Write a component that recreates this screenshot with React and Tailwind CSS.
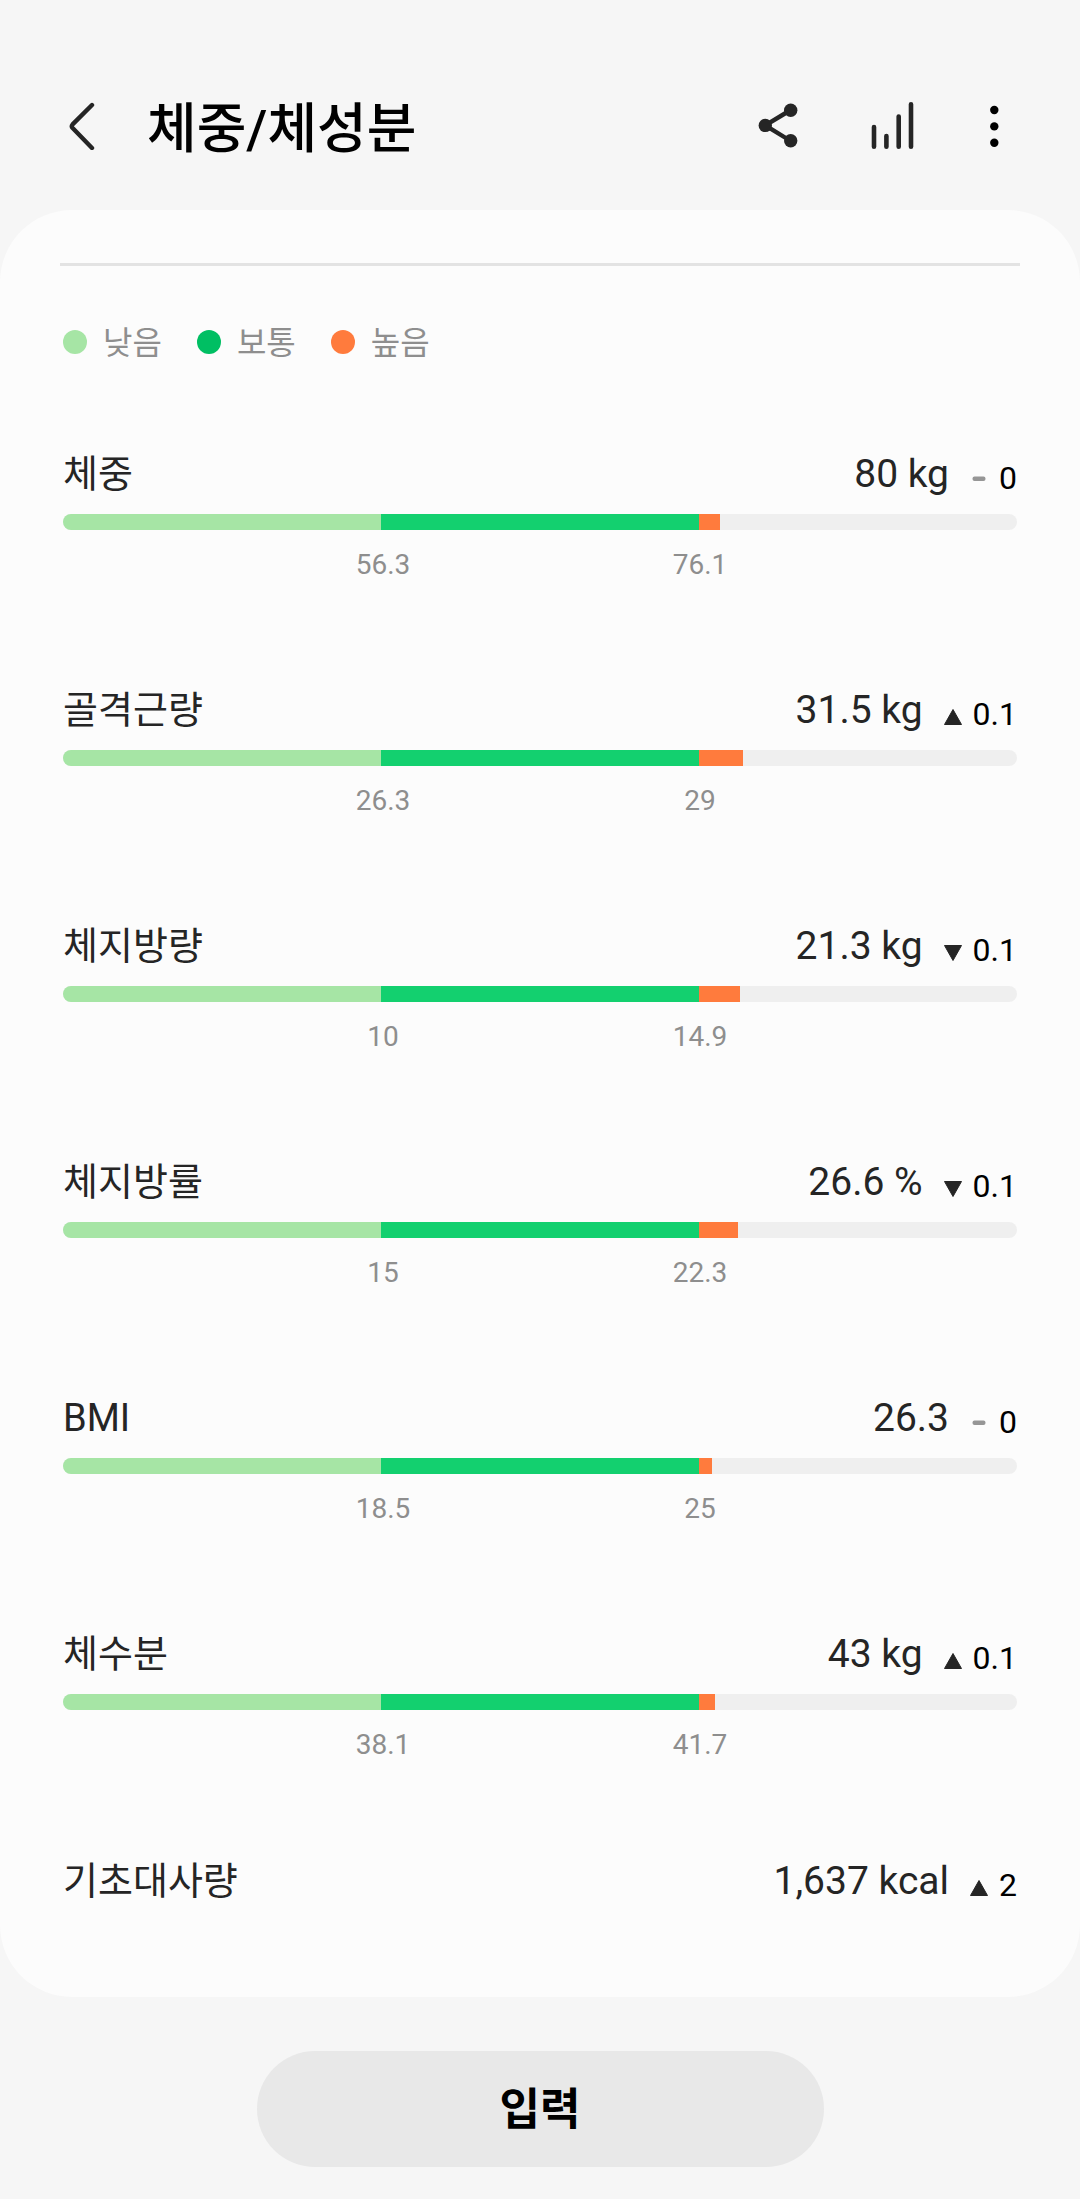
import React from 'react'

const legend = [
  { label: '낮음', dot: 'bg-[#a6e5a5]' },
  { label: '보통', dot: 'bg-[#00bf63]' },
  { label: '높음', dot: 'bg-[#ff7b3d]' }
]

// over = share of the whole bar that is filled past the upper limit, in %
const metrics = [
  { name: '체중', value: '80 kg', trend: 'same', delta: '0', low: '56.3', high: '76.1', over: 2.2 },
  { name: '골격근량', value: '31.5 kg', trend: 'up', delta: '0.1', low: '26.3', high: '29', over: 4.6 },
  { name: '체지방량', value: '21.3 kg', trend: 'down', delta: '0.1', low: '10', high: '14.9', over: 4.3 },
  { name: '체지방률', value: '26.6 %', trend: 'down', delta: '0.1', low: '15', high: '22.3', over: 4.1 },
  { name: 'BMI', value: '26.3', trend: 'same', delta: '0', low: '18.5', high: '25', over: 1.4 },
  { name: '체수분', value: '43 kg', trend: 'up', delta: '0.1', low: '38.1', high: '41.7', over: 1.7 }
]

const TrendIcon = ({ trend }) => (
  <svg className="w-[18px] h-10 shrink-0" viewBox="0 0 18 40" aria-hidden="true">
    {trend === 'up' && <path d="M9 15.5 17.5 30.5H.5Z" fill="#252525" stroke="#252525" strokeLinejoin="round" />}
    {trend === 'down' && <path d="M9 30.5 .5 15.5h17Z" fill="#252525" stroke="#252525" strokeLinejoin="round" />}
    {trend === 'same' && <rect x="2.5" y="18.6" width="13" height="4.4" rx="2" fill="#969696" />}
  </svg>
)

const MetricHead = ({ name, value, trend, delta }) => (
  <div className="flex items-end justify-between">
    <h2 className="text-[38px] leading-[48px] text-[#252525]">{name}</h2>
    <div className="flex items-end">
      <span className="text-[39px] leading-[48px] text-[#252525] mr-[21px]">{value}</span>
      <TrendIcon trend={trend} />
      <span className="text-[32px] leading-10 text-black ml-[11px]">{delta}</span>
    </div>
  </div>
)

const MetricRow = ({ metric }) => (
  <li>
    <MetricHead {...metric} />

    {/* Range bar */}
    <div className="flex h-4 mt-4 rounded-full overflow-hidden bg-[#efefef]">
      <div className="w-1/3 bg-[#a6e5a5]" />
      <div className="w-1/3 bg-[#13d06f]" />
      <div className="bg-[#ff7b3d]" style={{ width: `${metric.over}%` }} />
    </div>

    {/* Limits, centered under the segment edges */}
    <div className="grid grid-cols-6 mt-[15px] pl-[3px] text-[28px] leading-10 text-[#8e8e8e] text-center">
      <span className="col-start-2 col-span-2">{metric.low}</span>
      <span className="col-span-2">{metric.high}</span>
    </div>
  </li>
)

const Header = () => (
  <header className="flex items-center h-[210px] pt-[42px] pl-[57px] pr-[74px]">
    <button aria-label="뒤로">
      <svg className="w-12 h-12" viewBox="0 0 48 48" fill="none" stroke="#252525" strokeWidth="4.4" strokeLinecap="round" strokeLinejoin="round">
        <path d="M35 3 15.6 22.4Q14 24.2 15.6 26L35 46" />
      </svg>
    </button>
    <h1 className="flex-1 ml-[42px] pt-2 text-[54px] leading-[72px] font-medium text-black">체중/체성분</h1>
    <div className="flex items-center gap-[66px]">
      <button aria-label="공유">
        <svg className="w-12 h-12" viewBox="0 0 48 48" fill="#252525">
          <path d="M36.7 8 11.3 23.4 36.7 39" fill="none" stroke="#252525" strokeWidth="4.4" />
          <circle cx="36.7" cy="8.2" r="6.7" />
          <circle cx="11.3" cy="23.4" r="6.7" />
          <circle cx="36.7" cy="38.8" r="6.7" />
        </svg>
      </button>
      <button aria-label="차트">
        <svg className="w-12 h-12" viewBox="0 0 48 48" fill="none" stroke="#252525" strokeWidth="4.6" strokeLinecap="round">
          <path d="M6 25v19.7M18.4 34v10.7M30.7 14.5v30.2M43 2.3v42.4" />
        </svg>
      </button>
      <button aria-label="더보기">
        <svg className="w-6 h-12" viewBox="0 0 24 48" fill="#000">
          <circle cx="12.3" cy="8" r="4.2" />
          <circle cx="12.3" cy="24.4" r="4.2" />
          <circle cx="12.3" cy="40.8" r="4.2" />
        </svg>
      </button>
    </div>
  </header>
)

const App = () => {
  return (
    <div className="min-h-screen bg-[#f6f6f6] font-[Roboto,'Noto_Sans_CJK_KR',sans-serif]">
      <Header />

      <main className="bg-[#fcfcfc] rounded-[72px] px-[60px] pt-[53px] pb-[92px]">
        <hr className="border-0 h-[3px] bg-[#e3e3e3]" />

        <div className="px-[3px]">
          {/* Legend */}
          <ul className="flex gap-[35px] mt-14">
            {legend.map((item) => (
              <li key={item.label} className="flex items-center gap-4">
                <span className={`w-6 h-6 rounded-full ${item.dot}`} />
                <span className="pt-0.5 text-[32px] leading-[38px] text-[#8e8e8e]">{item.label}</span>
              </li>
            ))}
          </ul>

          <ul className="flex flex-col gap-[101px] mt-[88px]">
            {metrics.map((metric) => (
              <MetricRow key={metric.name} metric={metric} />
            ))}
          </ul>

          {/* Basal metabolic rate has no range */}
          <div className="mt-[92px]">
            <MetricHead name="기초대사량" value="1,637 kcal" trend="up" delta="2" />
          </div>
        </div>
      </main>

      <footer className="flex justify-center pt-[54px] pb-8 px-6">
        <button className="w-[567px] h-[116px] pt-0.5 rounded-full bg-[#e8e8e8] text-[44px] leading-[60px] font-bold text-black">
          입력
        </button>
      </footer>
    </div>
  )
}

export default App
